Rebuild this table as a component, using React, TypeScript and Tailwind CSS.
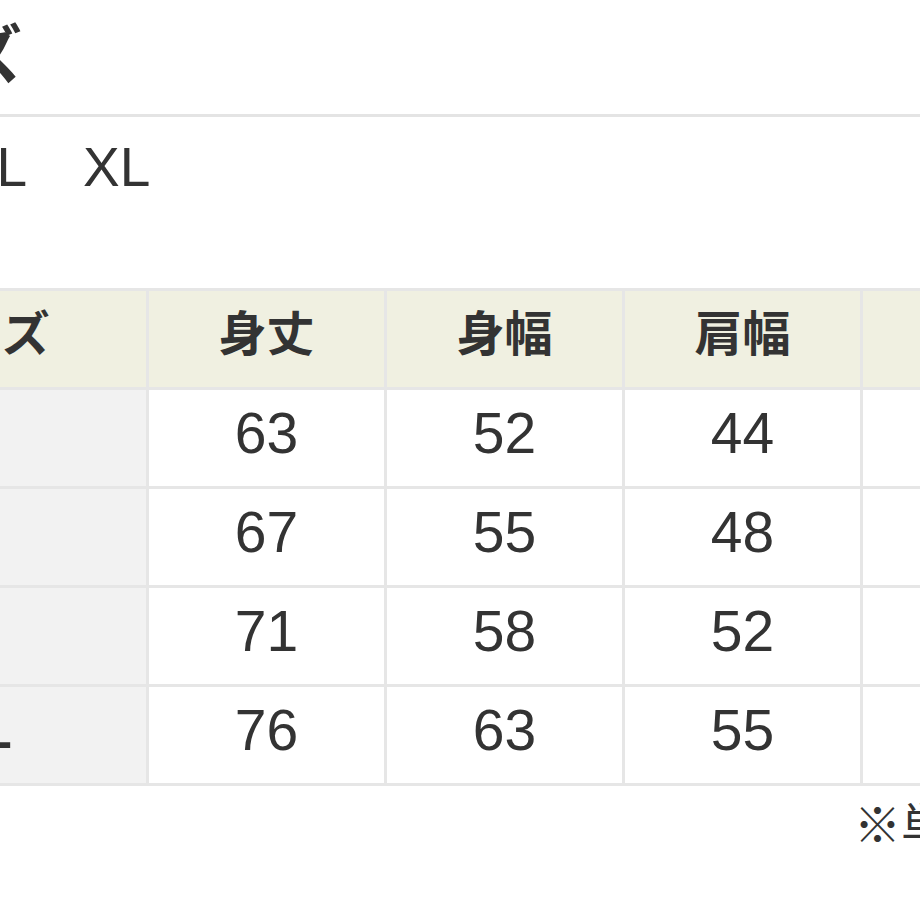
import React from 'react'

const jp = { fontFamily: '"Liberation Sans", "Noto Sans CJK JP", sans-serif' }

const headers = ['サイズ', '身丈', '身幅', '肩幅', '袖丈']
const rows = [
  ['S', '63', '52', '44', '20'],
  ['M', '67', '55', '48', '22'],
  ['L', '71', '58', '52', '24'],
  ['XL', '76', '63', '55', '25'],
]

export default function App() {
  return (
    <div className="w-[920px] h-[920px] overflow-hidden bg-white text-[#333]" style={jp}>
      <div className="ml-[-200px] w-[1500px]">
        <h2 className="pl-[32px] pt-[16px] h-[114px] text-[64px] font-bold leading-[80px]">サイズ</h2>
        <div className="h-[3px] bg-[#e4e4e4]" />
        <div className="flex gap-[56px] pl-[2px] pt-[20px] text-[55px] leading-[60px]">
          <span>S</span>
          <span>M</span>
          <span>L</span>
          <span>XL</span>
        </div>
        <table className="ml-[8px] mt-[91px] table-fixed border-collapse">
          <colgroup>
            <col className="w-[338px]" />
            <col className="w-[238px]" />
            <col className="w-[238px]" />
            <col className="w-[238px]" />
            <col className="w-[238px]" />
          </colgroup>
          <thead>
            <tr className="h-[99px] bg-[#f0f0e1]">
              {headers.map((h) => (
                <th key={h} className="border-[3px] border-[#e6e6e6] p-0 pb-[8px] text-[48px] leading-[60px] font-bold text-center">
                  {h}
                </th>
              ))}
            </tr>
          </thead>
          <tbody>
            {rows.map((r) => (
              <tr key={r[0]} className="h-[99px]">
                {r.map((c, i) => (
                  <td
                    key={i}
                    className={
                      i === 0
                        ? 'border-[3px] border-[#e6e6e6] bg-[#f2f2f2] p-0 pb-[10px] text-[52px] leading-[60px] font-bold text-center'
                        : 'border-[3px] border-[#e6e6e6] p-0 pb-[10px] text-[57px] leading-[60px] text-center'
                    }
                  >
                    {c}
                  </td>
                ))}
              </tr>
            ))}
          </tbody>
        </table>
        <p className="pl-[1054px] pt-[10px] text-[47px] leading-[60px] whitespace-nowrap">※単位：cm</p>
      </div>
    </div>
  )
}
